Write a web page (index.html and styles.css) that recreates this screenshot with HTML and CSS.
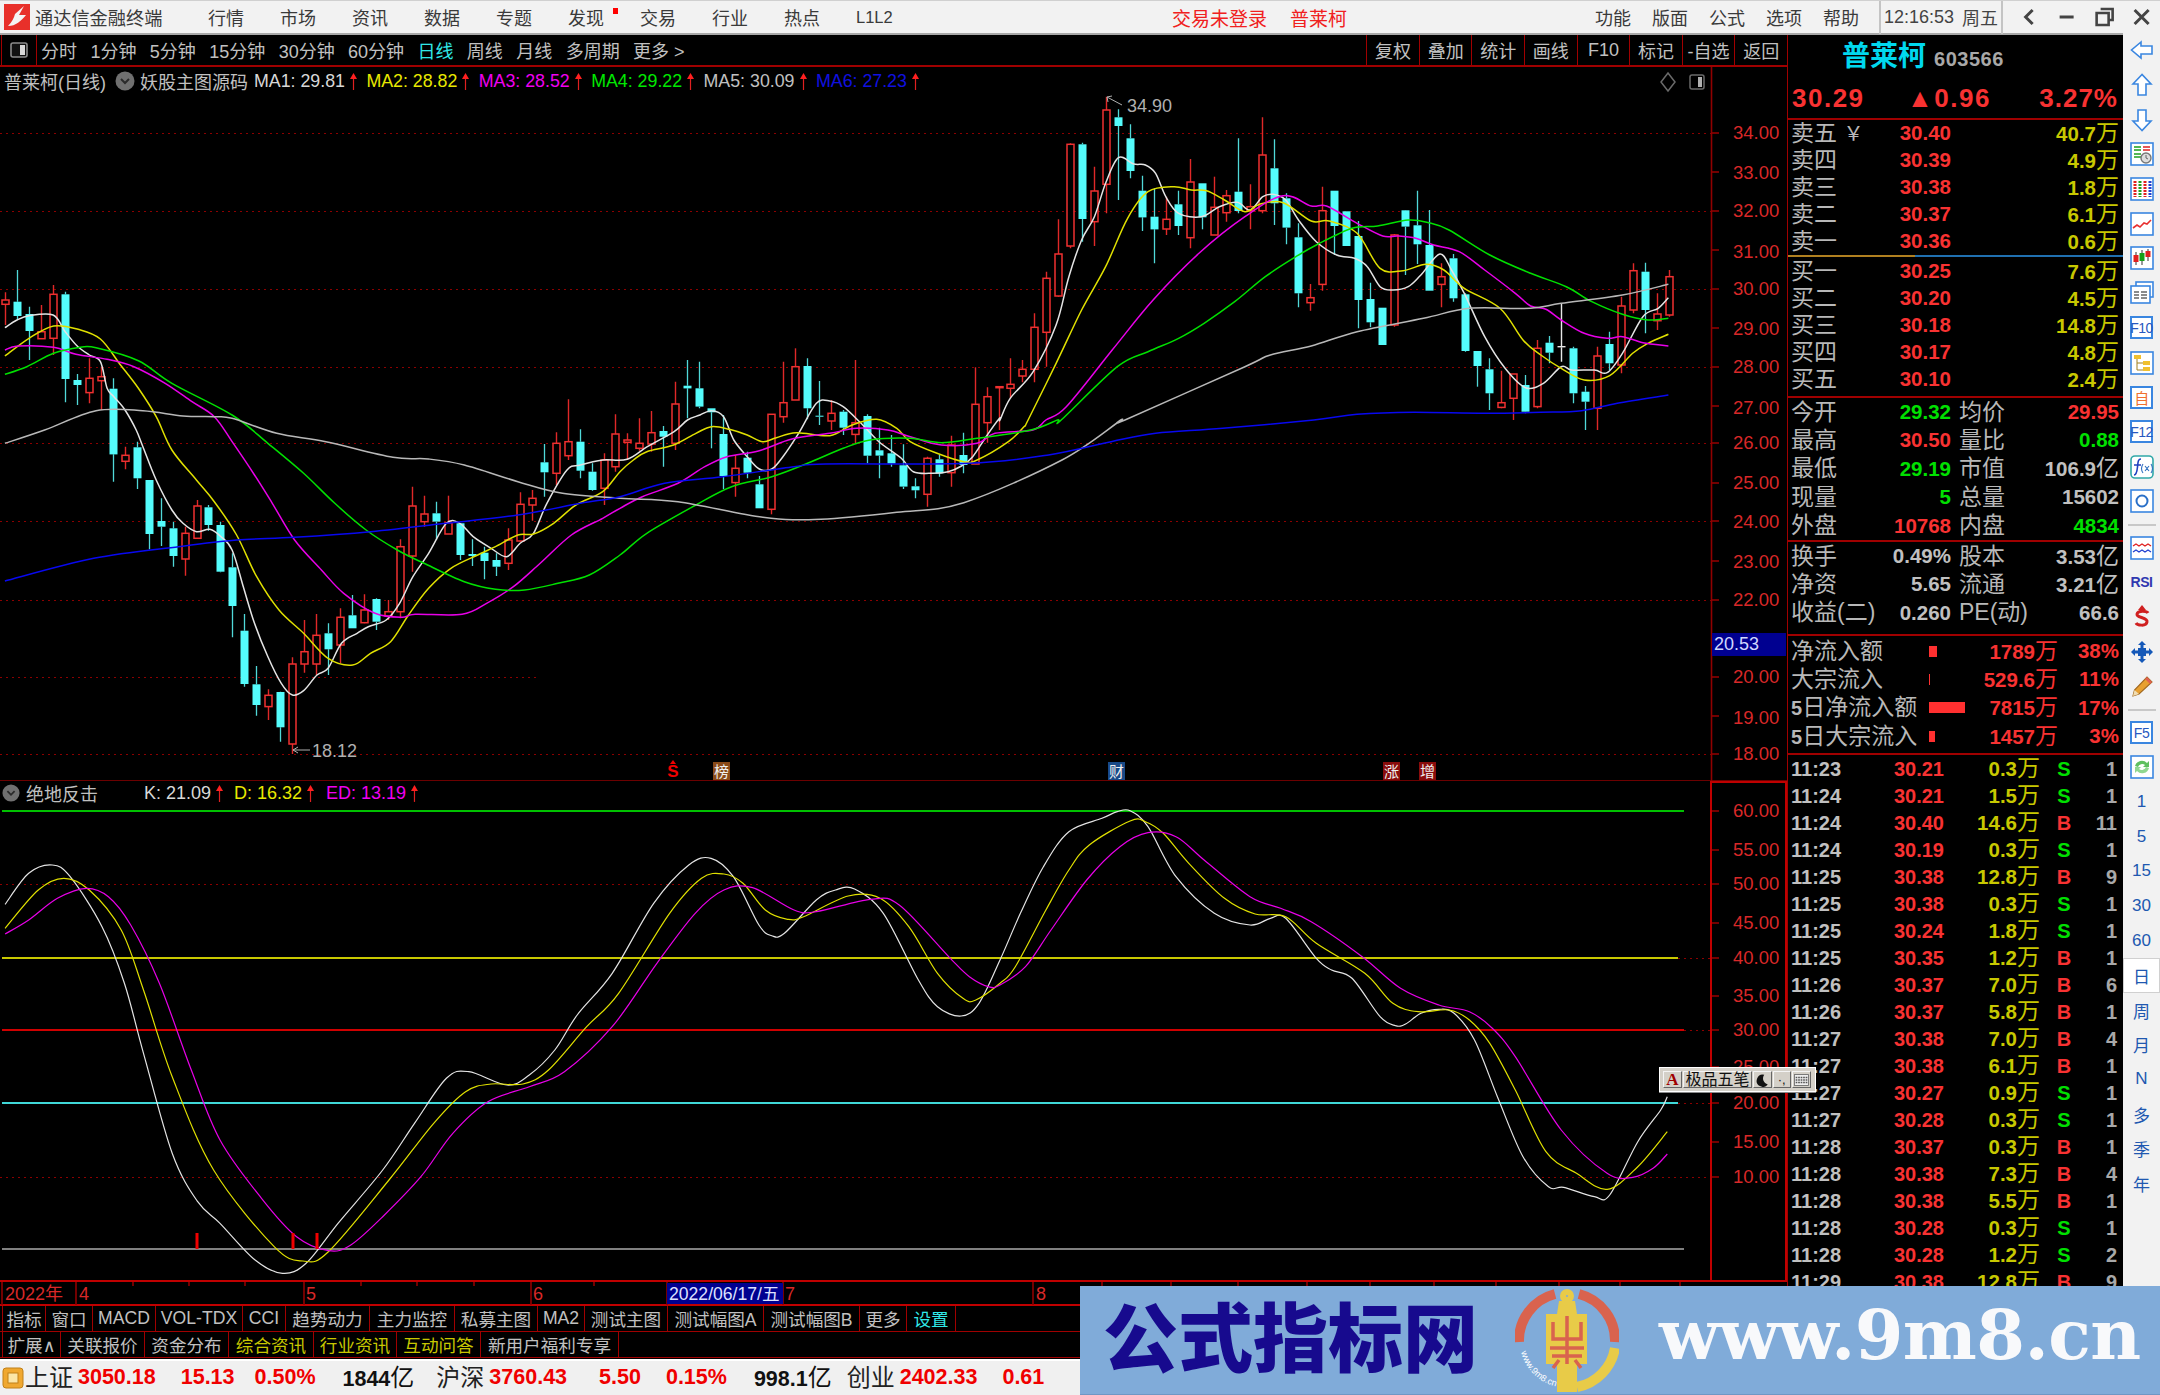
FILE: index.html
```html
<!DOCTYPE html>
<html lang="zh-CN">
<head>
<meta charset="utf-8">
<title>通达信金融终端</title>
<link rel="stylesheet" href="styles.css">
</head>
<body>
<svg class="defs" width="0" height="0">
  <symbol id="up" viewBox="0 0 7 17"><path d="M3.5 17V4" stroke="#e02020" stroke-width="1.2"/><path d="M3.5 0L7 6H0z" fill="#ff2020"/></symbol>
  <symbol id="drop" viewBox="0 0 20 20"><circle cx="10" cy="10" r="9.5" fill="#707070"/><path d="M6 8l4 4 4-4" fill="none" stroke="#2a2a2a" stroke-width="2"/></symbol>
</svg>
<div class="app">
  <header class="titlebar">
    <svg class="logo" viewBox="0 0 26 26"><rect width="26" height="26" fill="#e8302a"/><path d="M4 22C8 18 10 14 11 10L20 2 15 11 22 11C17 17 12 22 4 22Z" fill="#f4f4f4"/></svg>
    <span class="brand">通达信金融终端</span>
    <nav class="menu">
      <span>行情</span><span>市场</span><span>资讯</span><span>数据</span><span>专题</span><span class="dot">发现</span><span>交易</span><span>行业</span><span>热点</span><span class="l1l2">L1L2</span>
    </nav>
    <span class="alert first">交易未登录</span>
    <span class="alert second">普莱柯</span>
    <nav class="menu right">
      <span>功能</span><span>版面</span><span>公式</span><span>选项</span><span>帮助</span>
    </nav>
    <div class="clock"><span class="time">12:16:53</span><span>周五</span></div>
    <div class="winbtns">
      <svg viewBox="0 0 20 20"><path d="M13 3L6 10l7 7" fill="none" stroke="#444" stroke-width="3"/></svg>
      <svg viewBox="0 0 20 20"><path d="M3 10h14" stroke="#444" stroke-width="3"/></svg>
      <svg viewBox="0 0 20 20"><path d="M6 2h12v11h-4M2 6h12v12H2z" fill="none" stroke="#444" stroke-width="2.6"/></svg>
      <svg viewBox="0 0 20 20"><path d="M3 3l14 14M17 3L3 17" stroke="#444" stroke-width="3"/></svg>
    </div>
  </header>

  <main class="main">
    <section class="left">
      <div class="toolbar">
        <div class="toggle"><svg viewBox="0 0 18 16"><rect x="1" y="1" width="16" height="14" rx="2" fill="#111" stroke="#8a8a8a" stroke-width="1.6"/><rect x="10" y="3" width="5" height="10" fill="#d8d8d8"/></svg></div>
        <div class="periods">
          <span>分时</span><span>1分钟</span><span>5分钟</span><span>15分钟</span><span>30分钟</span><span>60分钟</span><span class="on">日线</span><span>周线</span><span>月线</span><span>多周期</span><span>更多 &gt;</span>
        </div>
        <div class="actions">
          <span>复权</span><span>叠加</span><span>统计</span><span>画线</span><span>F10</span><span>标记</span><span>-自选</span><span>返回</span>
        </div>
      </div>

      <div class="pane upper">
        <svg id="price" class="plot" viewBox="0 67 1787 714" width="1787" height="714">
          <g id="price-grid"></g>
          <g id="candles"></g>
          <g id="mas"></g>
          <path class="callout" d="M1107 97l15 8M1107 97l5-1M1107 97l1 5M293 750h17M293 750l5-3M293 750l5 3"/>
          <text class="callout-t" x="1127" y="112">34.90</text>
          <text class="callout-t" x="312" y="757">18.12</text>
          <g class="axis-t">
            <text x="1733" y="139">34.00</text><text x="1733" y="179">33.00</text><text x="1733" y="217">32.00</text><text x="1733" y="258">31.00</text><text x="1733" y="295">30.00</text><text x="1733" y="335">29.00</text><text x="1733" y="373">28.00</text><text x="1733" y="414">27.00</text><text x="1733" y="449">26.00</text><text x="1733" y="489">25.00</text><text x="1733" y="528">24.00</text><text x="1733" y="568">23.00</text><text x="1733" y="606">22.00</text><text x="1733" y="683">20.00</text><text x="1733" y="724">19.00</text><text x="1733" y="760">18.00</text>
          </g>
          <rect class="cur-box" x="1712" y="633" width="74" height="23"/>
          <text class="cur-t" x="1714" y="650">20.53</text>
          <path class="mini" d="M1668 73l7 9-7 9-7-9z"/>
          <rect class="mini" x="1690" y="75" width="14" height="14" rx="2"/><rect class="mini-f" x="1698" y="77" width="4" height="10"/>
          <text class="sig red" x="673" y="777">S</text><path class="sig-a" d="M673 760l3 4h-6z"/>
          <rect class="sig-b brown" x="713" y="762" width="17" height="18"/><text class="sig-w" x="714" y="777">榜</text>
          <rect class="sig-b navy" x="1108" y="762" width="17" height="18"/><text class="sig-w" x="1109" y="777">财</text>
          <rect class="sig-b maroon" x="1383" y="762" width="17" height="18"/><text class="sig-w" x="1384" y="777">涨</text>
          <rect class="sig-b maroon" x="1419" y="762" width="17" height="18"/><text class="sig-w" x="1420" y="777">增</text>
        </svg>
        <div class="inforow">
          <span class="stock">普莱柯(日线)</span>
          <svg class="dropic"><use href="#drop"/></svg>
          <span class="formula">妖股主图源码</span>
          <span class="ma c1">MA1: 29.81<svg class="uparrow"><use href="#up"/></svg></span>
          <span class="ma c2">MA2: 28.82<svg class="uparrow"><use href="#up"/></svg></span>
          <span class="ma c3">MA3: 28.52<svg class="uparrow"><use href="#up"/></svg></span>
          <span class="ma c4">MA4: 29.22<svg class="uparrow"><use href="#up"/></svg></span>
          <span class="ma c5">MA5: 30.09<svg class="uparrow"><use href="#up"/></svg></span>
          <span class="ma c6">MA6: 27.23<svg class="uparrow"><use href="#up"/></svg></span>
        </div>
      </div>

      <div class="pane lower">
        <svg id="osc" class="plot" viewBox="0 781 1787 525" width="1787" height="525">
          <g id="osc-grid"></g>
          <g id="kdj"></g>
          <g class="axis-t">
            <text x="1733" y="817">60.00</text><text x="1733" y="856">55.00</text><text x="1733" y="890">50.00</text><text x="1733" y="929">45.00</text><text x="1733" y="964">40.00</text><text x="1733" y="1002">35.00</text><text x="1733" y="1036">30.00</text><text x="1733" y="1073">25.00</text><text x="1733" y="1109">20.00</text><text x="1733" y="1148">15.00</text><text x="1733" y="1183">10.00</text>
          </g>
          <rect class="cur-box" x="667" y="1283" width="116" height="21"/>
          <g class="axis-t dates">
            <text x="5" y="1300">2022年</text><text x="79" y="1300">4</text><text x="306" y="1300">5</text><text x="533" y="1300">6</text><text x="785" y="1300">7</text><text x="1036" y="1300">8</text>
          </g>
          <text class="date-t" x="669" y="1300">2022/06/17/五</text>
        </svg>
        <div class="inforow kd">
          <svg class="dropic"><use href="#drop"/></svg>
          <span class="formula">绝地反击</span>
          <span class="kv k c1">K: 21.09<svg class="uparrow"><use href="#up"/></svg></span>
          <span class="kv d c2">D: 16.32<svg class="uparrow"><use href="#up"/></svg></span>
          <span class="kv e c3">ED: 13.19<svg class="uparrow"><use href="#up"/></svg></span>
        </div>
      </div>

      <div class="tools">
        <span class="w44">指标</span><span class="w47">窗口</span><span class="w63">MACD</span><span class="w87">VOL-TDX</span><span class="w43">CCI</span><span class="w84">趋势动力</span><span class="w85">主力监控</span><span class="w83">私募主图</span><span class="w47">MA2</span><span class="w83">测试主图</span><span class="w96">测试幅图A</span><span class="w96">测试幅图B</span><span class="w47">更多</span><span class="w49 cy">设置</span>
      </div>
      <div class="tools">
        <span class="w59">扩展∧</span><span class="w84">关联报价</span><span class="w84">资金分布</span><span class="w85 ye">综合资讯</span><span class="w83 ye">行业资讯</span><span class="w84 ye">互动问答</span><span class="w138">新用户福利专享</span>
      </div>
    </section>

    <aside class="quote">
      <div class="q-name"><span class="q-stock">普莱柯</span><span class="q-code">603566</span></div>
      <div class="q-price"><span>30.29</span><span>▲0.96</span><span>3.27%</span></div>

      <div class="book asks">
        <div class="b-row"><span class="lb">卖五 <i>￥</i></span><b class="r">30.40</b><span class="vol"><b>40.7</b>万</span></div>
        <div class="b-row"><span class="lb">卖四</span><b class="r">30.39</b><span class="vol"><b>4.9</b>万</span></div>
        <div class="b-row"><span class="lb">卖三</span><b class="r">30.38</b><span class="vol"><b>1.8</b>万</span></div>
        <div class="b-row"><span class="lb">卖二</span><b class="r">30.37</b><span class="vol"><b>6.1</b>万</span></div>
        <div class="b-row"><span class="lb">卖一</span><b class="r">30.36</b><span class="vol"><b>0.6</b>万</span></div>
      </div>
      <div class="book-sep"></div>
      <div class="book bids">
        <div class="b-row"><span class="lb">买一</span><b class="r">30.25</b><span class="vol"><b>7.6</b>万</span></div>
        <div class="b-row"><span class="lb">买二</span><b class="r">30.20</b><span class="vol"><b>4.5</b>万</span></div>
        <div class="b-row"><span class="lb">买三</span><b class="r">30.18</b><span class="vol"><b>14.8</b>万</span></div>
        <div class="b-row"><span class="lb">买四</span><b class="r">30.17</b><span class="vol"><b>4.8</b>万</span></div>
        <div class="b-row"><span class="lb">买五</span><b class="r">30.10</b><span class="vol"><b>2.4</b>万</span></div>
      </div>

      <div class="stats s5">
        <div class="s-row"><span class="lb">今开</span><b class="g">29.32</b><span class="lb">均价</span><b class="r">29.95</b></div>
        <div class="s-row"><span class="lb">最高</span><b class="r">30.50</b><span class="lb">量比</span><b class="g">0.88</b></div>
        <div class="s-row"><span class="lb">最低</span><b class="g">29.19</b><span class="lb">市值</span><span class="gr"><b>106.9</b>亿</span></div>
        <div class="s-row"><span class="lb">现量</span><b class="g">5</b><span class="lb">总量</span><b class="gr">15602</b></div>
        <div class="s-row"><span class="lb">外盘</span><b class="r">10768</b><span class="lb">内盘</span><b class="g">4834</b></div>
      </div>
      <div class="stats s3">
        <div class="s-row"><span class="lb">换手</span><b class="gr">0.49%</b><span class="lb">股本</span><span class="gr"><b>3.53</b>亿</span></div>
        <div class="s-row"><span class="lb">净资</span><b class="gr">5.65</b><span class="lb">流通</span><span class="gr"><b>3.21</b>亿</span></div>
        <div class="s-row"><span class="lb">收益(二)</span><b class="gr">0.260</b><span class="lb">PE(动)</span><b class="gr">66.6</b></div>
      </div>

      <div class="flows">
        <div class="f-row"><span class="lb">净流入额</span><i class="bar" style="width:8px"></i><span class="amt"><b>1789</b>万</span><b class="r">38%</b></div>
        <div class="f-row"><span class="lb">大宗流入</span><i class="bar" style="width:1px"></i><span class="amt"><b>529.6</b>万</span><b class="r">11%</b></div>
        <div class="f-row"><span class="lb"><b class="d5">5</b>日净流入额</span><i class="bar" style="width:36px"></i><span class="amt"><b>7815</b>万</span><b class="r">17%</b></div>
        <div class="f-row"><span class="lb"><b class="d5">5</b>日大宗流入</span><i class="bar" style="width:6px"></i><span class="amt"><b>1457</b>万</span><b class="r">3%</b></div>
      </div>

      <div class="ticks">
        <div class="t-row"><b>11:23</b><b class="r">30.21</b><span class="vol"><b>0.3</b>万</span><b class="g bs">S</b><b class="n">1</b></div>
        <div class="t-row"><b>11:24</b><b class="r">30.21</b><span class="vol"><b>1.5</b>万</span><b class="g bs">S</b><b class="n">1</b></div>
        <div class="t-row"><b>11:24</b><b class="r">30.40</b><span class="vol"><b>14.6</b>万</span><b class="r bs">B</b><b class="n">11</b></div>
        <div class="t-row"><b>11:24</b><b class="r">30.19</b><span class="vol"><b>0.3</b>万</span><b class="g bs">S</b><b class="n">1</b></div>
        <div class="t-row"><b>11:25</b><b class="r">30.38</b><span class="vol"><b>12.8</b>万</span><b class="r bs">B</b><b class="n">9</b></div>
        <div class="t-row"><b>11:25</b><b class="r">30.38</b><span class="vol"><b>0.3</b>万</span><b class="g bs">S</b><b class="n">1</b></div>
        <div class="t-row"><b>11:25</b><b class="r">30.24</b><span class="vol"><b>1.8</b>万</span><b class="g bs">S</b><b class="n">1</b></div>
        <div class="t-row"><b>11:25</b><b class="r">30.35</b><span class="vol"><b>1.2</b>万</span><b class="r bs">B</b><b class="n">1</b></div>
        <div class="t-row"><b>11:26</b><b class="r">30.37</b><span class="vol"><b>7.0</b>万</span><b class="r bs">B</b><b class="n">6</b></div>
        <div class="t-row"><b>11:26</b><b class="r">30.37</b><span class="vol"><b>5.8</b>万</span><b class="r bs">B</b><b class="n">1</b></div>
        <div class="t-row"><b>11:27</b><b class="r">30.38</b><span class="vol"><b>7.0</b>万</span><b class="r bs">B</b><b class="n">4</b></div>
        <div class="t-row"><b>11:27</b><b class="r">30.38</b><span class="vol"><b>6.1</b>万</span><b class="r bs">B</b><b class="n">1</b></div>
        <div class="t-row"><b>11:27</b><b class="r">30.27</b><span class="vol"><b>0.9</b>万</span><b class="g bs">S</b><b class="n">1</b></div>
        <div class="t-row"><b>11:27</b><b class="r">30.28</b><span class="vol"><b>0.3</b>万</span><b class="g bs">S</b><b class="n">1</b></div>
        <div class="t-row"><b>11:28</b><b class="r">30.37</b><span class="vol"><b>0.3</b>万</span><b class="r bs">B</b><b class="n">1</b></div>
        <div class="t-row"><b>11:28</b><b class="r">30.38</b><span class="vol"><b>7.3</b>万</span><b class="r bs">B</b><b class="n">4</b></div>
        <div class="t-row"><b>11:28</b><b class="r">30.38</b><span class="vol"><b>5.5</b>万</span><b class="r bs">B</b><b class="n">1</b></div>
        <div class="t-row"><b>11:28</b><b class="r">30.28</b><span class="vol"><b>0.3</b>万</span><b class="g bs">S</b><b class="n">1</b></div>
        <div class="t-row"><b>11:28</b><b class="r">30.28</b><span class="vol"><b>1.2</b>万</span><b class="g bs">S</b><b class="n">2</b></div>
        <div class="t-row"><b>11:29</b><b class="r">30.38</b><span class="vol"><b>12.8</b>万</span><b class="r bs">B</b><b class="n">9</b></div>
      </div>
    </aside>

    <aside class="side">
      <div class="ic"><svg viewBox="0 0 24 24"><path d="M11 4L1.5 12 11 20v-4h11V8H11z" fill="#fff" stroke="#3a86e0" stroke-width="1.6"/></svg></div>
      <div class="ic"><svg viewBox="0 0 24 24"><path d="M12 1.5L3 11h5v11h8V11h5z" fill="#fff" stroke="#3a86e0" stroke-width="1.6"/></svg></div>
      <div class="ic"><svg viewBox="0 0 24 24"><path d="M12 22.5L3 13h5V2h8v11h5z" fill="#fff" stroke="#3a86e0" stroke-width="1.6"/></svg></div>
      <div class="ic"><svg viewBox="0 0 24 24"><rect class="bx" x="1" y="1" width="22" height="22"/><path d="M4 5h7M4 8h7" stroke="#18a018" stroke-width="1.6"/><path d="M13 5h7M13 8h7" stroke="#e02020" stroke-width="1.6"/><path d="M4 12h7M4 15h7" stroke="#20a020" stroke-width="1.6"/><circle cx="16" cy="16" r="5" fill="#ddd" stroke="#777" stroke-width="1.4"/><path d="M16 13v3l2 1" stroke="#666" fill="none"/></svg></div>
      <div class="ic"><svg viewBox="0 0 24 24"><rect class="bx" x="1" y="1" width="22" height="22"/><path d="M5 4v16" stroke="#e02020" stroke-width="3" stroke-dasharray="2 1"/><path d="M10 4v16" stroke="#20a020" stroke-width="3" stroke-dasharray="2 1"/><path d="M15 4v16" stroke="#e02020" stroke-width="3" stroke-dasharray="2 1"/><path d="M20 4v16" stroke="#2040d0" stroke-width="3" stroke-dasharray="2 1"/></svg></div>
      <div class="ic"><svg viewBox="0 0 24 24"><rect class="bx" x="1" y="1" width="22" height="22"/><path d="M3 16l4-3 3 2 4-4 3 1 4-4" fill="none" stroke="#e83030" stroke-width="1.6"/></svg></div>
      <div class="ic"><svg viewBox="0 0 24 24"><rect class="bx" x="1" y="1" width="22" height="22"/><path d="M6 6v13M12 4v15M18 3v12" stroke="#333"/><rect x="3.5" y="9" width="5" height="7" fill="#e02020"/><rect x="9.5" y="7" width="5" height="8" fill="#18a018"/><rect x="15.5" y="5" width="5" height="6" fill="#e02020"/></svg></div>
      <div class="ic"><svg viewBox="0 0 24 24"><rect class="bx" x="6" y="1" width="17" height="15"/><rect class="bx" x="1" y="5" width="19" height="17"/><path d="M4 11h5M4 14h5M4 17h5M11 11h6M11 14h6M11 17h6" stroke="#666" stroke-width="1.4"/></svg></div>
      <div class="ic"><span class="fk">F10</span></div>
      <div class="ic"><svg viewBox="0 0 24 24"><rect class="bx" x="1" y="1" width="22" height="22"/><path d="M7 7v12h6M7 12h6" fill="none" stroke="#a08020"/><rect x="4" y="4" width="7" height="4" fill="#f0c030"/><rect x="13" y="10" width="7" height="4" fill="#f0c030"/><rect x="13" y="16" width="7" height="4" fill="#f0c030"/></svg></div>
      <div class="ic"><span class="fk org">自</span></div>
      <div class="ic"><span class="fk">F12</span></div>
      <div class="ic"><svg viewBox="0 0 24 24"><rect class="bx teal" x="1" y="1" width="22" height="22" rx="4"/><path d="M11 4c-3 0-3 3-3.500 8S6 20 4 20M4 10h7" fill="none" stroke="#2040c0" stroke-width="1.6"/><path d="M13 9c-2 3-2 6 0 9M21 9c2 3 2 6 0 9M15 11l4 5M19 11l-4 5" fill="none" stroke="#3070c0" stroke-width="1.1"/></svg></div>
      <div class="ic"><svg viewBox="0 0 24 24"><rect class="bx" x="1" y="1" width="22" height="22"/><circle cx="12" cy="12" r="5.500" fill="none" stroke="#2a70c8" stroke-width="2"/></svg></div>
      <div class="side-sep"></div>
      <div class="ic"><svg viewBox="0 0 24 24"><rect class="bx" x="1" y="1" width="22" height="22"/><path d="M3 10l3-2 3 2 3-2 3 2 3-2 3 2" fill="none" stroke="#e02020" stroke-width="1.3"/><path d="M3 16l3-2 3 2 3-2 3 2 3-2 3 2" fill="none" stroke="#2040d0" stroke-width="1.3"/></svg></div>
      <div class="ic"><span class="rsi">RSI</span></div>
      <div class="ic"><svg viewBox="0 0 24 24"><path d="M18 8c-1-2-10-3-11 1s11 3 10 8-10 3-11 1" fill="none" stroke="#d02020" stroke-width="3"/><path d="M12 0l4 5H8z" fill="#d02020"/></svg></div>
      <div class="ic"><svg viewBox="0 0 24 24"><path d="M12 1l4 4h-8zM12 23l-4-4h8zM1 12l4-4v8zM23 12l-4 4V8z" fill="#1458b8"/><rect x="8" y="8" width="8" height="8" fill="#1458b8"/><path d="M5 12h14M12 5v14" stroke="#1458b8" stroke-width="3"/></svg></div>
      <div class="ic"><svg viewBox="0 0 24 24"><path d="M3 22l1.500-6L17 3l5 5L9 20z" fill="#e8a030" stroke="#a06820" stroke-width="1.100"/><path d="M17 3l5 5-2 2-5-5z" fill="#e06050"/><path d="M3 22l1.500-6 4.500 4z" fill="#f0dcb0"/></svg></div>
      <div class="side-sep"></div>
      <div class="ic"><span class="fk">F5</span></div>
      <div class="ic"><svg viewBox="0 0 24 24"><rect class="bx" x="1" y="1" width="22" height="22"/><path d="M5 11a7 7 0 0 1 12-3l2-2v6h-6l2-2a4.500 4.500 0 0 0-7 2z" fill="#60c060"/><path d="M19 13a7 7 0 0 1-12 3l-2 2v-6h6l-2 2a4.500 4.500 0 0 0 7-2z" fill="#90d890"/></svg></div>
      <div class="ic per">1</div><div class="ic per">5</div><div class="ic per">15</div><div class="ic per">30</div><div class="ic per">60</div>
      <div class="ic per sel">日</div><div class="ic per">周</div><div class="ic per">月</div><div class="ic per">N</div><div class="ic per">多</div><div class="ic per">季</div><div class="ic per">年</div>
    </aside>
  </main>

  <footer class="status">
    <svg class="st-ic" viewBox="0 0 22 22"><rect x="1" y="1" width="20" height="20" rx="3" fill="#f0a830" stroke="#c08018"/><rect x="6" y="6" width="10" height="10" fill="#fbe6a8" stroke="#c08018"/></svg>
    <span class="st-l">上证</span><b class="st-v">3050.18</b><b class="st-n">15.13</b><b class="st-n near">0.50%</b><span class="st-k"><b>1844</b>亿</span>
    <span class="st-l">沪深</span><b class="st-v">3760.43</b><b class="st-n wide">5.50</b><b class="st-n">0.15%</b><span class="st-k"><b>998.1</b>亿</span>
    <span class="st-l tight">创业</span><b class="st-v">2402.33</b><b class="st-n">0.61</b>
  </footer>
</div>

<div class="ime">
  <span class="ime-a">A</span>
  <span class="ime-n">极品五笔</span>
  <span class="ime-b"><svg viewBox="0 0 16 16"><path d="M10 2a7 7 0 1 0 4 11A7 7 0 0 1 10 2z" fill="#111"/></svg></span>
  <span class="ime-b dots">·,</span>
  <span class="ime-b"><svg viewBox="0 0 18 14"><rect x=".5" y=".5" width="17" height="13" fill="#eee" stroke="#666"/><path d="M2 4h14M2 7h14M2 10h14" stroke="#555" stroke-dasharray="2 1" stroke-width="2"/></svg></span>
</div>

<div class="mark">
  <span class="mark-cn">公式指标网</span>
  <svg class="mark-logo" viewBox="0 0 104 104">
    <defs><path id="wm-arc" d="M6 64A47 47 0 0 0 44 99"/></defs>
    <path d="M4 54A48 48 0 0 1 40 6" fill="none" stroke="#d9634e" stroke-width="10"/>
    <path d="M64 6A48 48 0 0 1 100 54" fill="none" stroke="#d9634e" stroke-width="10"/>
    <path d="M100 60A48 48 0 0 1 62 99" fill="none" stroke="#e8cb48" stroke-width="10"/>
    <text class="mark-arc"><textPath href="#wm-arc">www.9m8.cn</textPath></text>
    <circle cx="52" cy="8" r="4" fill="none" stroke="#e8cb48" stroke-width="6"/>
    <path d="M44 13h16l2 13h10v50H62v28H42V76H31V26h11z" fill="#e8cb48"/>
    <path d="M38 34v17h28V34M52 28v28M35 60h34M52 56v20M37 68h30M44 72l-6 8M60 72l6 8" fill="none" stroke="#d9634e" stroke-width="3.500"/>
  </svg>
  <span class="mark-url">www.9m8.cn</span>
</div>

<script src="chart.js"></script>
</body>
</html>
```
FILE: styles.css
```css
* { box-sizing: border-box; }
html, body { margin: 0; padding: 0; }
body {
  width: 2160px; height: 1395px; overflow: hidden; position: relative;
  background: #000; color: #c0c0c0;
  font-family: "Liberation Sans", "DejaVu Sans", "Noto Sans CJK SC", sans-serif;
  font-size: 18px;
}
b { font-weight: 700; }
i { font-style: normal; }
.defs { position: absolute; }
.app { display: flex; flex-direction: column; width: 2160px; height: 1395px; }

/* title bar */
.titlebar {
  height: 35px; flex: none; display: flex; align-items: center;
  background: #f2f2f2; border-top: 1px solid #d0d0d0; border-bottom: 2px solid #a8a8a8; color: #333;
}
.logo { width: 26px; height: 26px; margin-left: 4px; flex: none; }
.brand { margin-left: 5px; font-size: 18.2px; width: 128px; white-space: nowrap; color: #3a3a3a; }
.menu { display: flex; align-items: center; gap: 36px; margin-left: 45px; color: #3a3a3a; }
.menu span { width: 36px; white-space: nowrap; font-size: 18px; }
.menu .l1l2 { font-size: 16.5px; }
.menu .dot { position: relative; }
.menu .dot::after { content: ""; position: absolute; left: 45px; top: 4px; width: 5px; height: 6px; background: #f00; }
.alert { color: #f02020; font-size: 19px; white-space: nowrap; }
.alert.first { margin-left: 280px; }
.alert.second { margin-left: 23px; }
.menu.right { gap: 21px; margin-left: auto; }
.clock {
  margin-left: 20px; width: 124px; height: 33px; display: flex; align-items: center; justify-content: center; gap: 8px;
  border-left: 2px solid #c4c4c4; border-right: 2px solid #c4c4c4; color: #444; white-space: nowrap;
}
.winbtns { display: flex; margin-left: 8px; width: 149px; flex: none; }
.winbtns svg { width: 37.25px; height: 20px; }

/* main */
.main { display: flex; flex: 1; min-height: 0; }
.left { width: 1787px; flex: none; display: flex; flex-direction: column; }

.toolbar { height: 32px; flex: none; display: flex; align-items: center; border-bottom: 2px solid #a00000; }
.toggle { width: 36px; height: 30px; border-left: 1px solid #a00000; border-right: 1px solid #a00000; display: flex; align-items: center; justify-content: center; margin-left: 1px; }
.toggle svg { width: 18px; height: 16px; }
.periods { display: flex; gap: 13.4px; margin-left: 4px; white-space: nowrap; }
.periods .on { color: #30e8e8; }
.actions { display: flex; margin-left: auto; height: 30px; }
.actions span { width: 52.6px; display: flex; align-items: center; justify-content: center; border-left: 1px solid #a00000; white-space: nowrap; }

.pane { position: relative; flex: none; }
.pane.upper { height: 714px; }
.pane.lower { height: 525px; }
.plot { display: block; }
.inforow { position: absolute; left: 0; top: 0; height: 28px; display: flex; align-items: center; white-space: nowrap; }
.stock { margin-left: 4px; width: 108px; }
.dropic { width: 20px; height: 20px; margin-left: 3px; flex: none; }
.formula { margin-left: 5px; width: 114px; }
.ma { width: 112.4px; display: flex; align-items: center; font-size: 17.8px; }
.uparrow { width: 7px; height: 17px; margin-left: 5px; }
.c1 { color: #d8d8d8; } .c2 { color: #e8e800; } .c3 { color: #f000f0; } .c4 { color: #00e800; } .c5 { color: #c0c0c0; } .c6 { color: #1010e0; }
.inforow.kd { height: 24px; }
.kd .dropic { margin-left: 2px; width: 18px; height: 18px; }
.kd .formula { margin-left: 6px; width: 118px; }
.kv { display: flex; align-items: center; }
.kv.k { width: 90px; } .kv.d { width: 92px; } .kv.e { width: 92px; }

/* svg chart */
.grid-dot { stroke: #8c0000; stroke-width: 1; stroke-dasharray: 2 4; fill: none; }
.axis-line { stroke: #900000; stroke-width: 1.6; fill: none; }
.axis-thick { stroke: #c00000; stroke-width: 2; fill: none; }
.axis-t text { fill: #d82828; font-size: 18.5px; }
.dates text { font-size: 18px; }
.date-t { fill: #dde0ff; font-size: 17.6px; }
.cur-box { fill: #000090; }
.cur-t { fill: #d0d8ff; font-size: 18px; }
.callout { stroke: #b0b0b0; fill: none; stroke-width: 1; }
.callout-t { fill: #b0b0b0; font-size: 18px; }
.mini { fill: none; stroke: #6a6a6a; stroke-width: 1.5; }
.mini-f { fill: #b0b0b0; }
.sig { font-size: 17px; font-weight: 700; }
.sig.red { fill: #f00000; text-anchor: middle; }
.sig-a { fill: #f00000; }
.sig-b.brown { fill: #8a4a18; } .sig-b.navy { fill: #184a88; } .sig-b.maroon { fill: #8a0c0c; }
.sig-w { fill: #f0f0f0; font-size: 15px; }
.c-red { fill: #000; stroke: #f03030; stroke-width: 1.5; }
.w-red { stroke: #e02828; stroke-width: 1.4; }
.c-cy { fill: #54fcfc; }
.w-cy { stroke: #50d8d8; stroke-width: 1.3; }
.w-wh { stroke: #e8e8e8; stroke-width: 1.4; }
.ln { fill: none; stroke-width: 1.5; stroke-linejoin: round; }
.ln.thin { stroke-width: 1.2; }
.l1 { stroke: #e4e4e4; } .l2 { stroke: #e0e000; } .l3 { stroke: #e800e8; } .l4 { stroke: #00e000; } .l5 { stroke: #b8b8b8; } .l6 { stroke: #0808f0; }
.h { fill: none; stroke-width: 2; }
.h.gn { stroke: #00c000; } .h.ye { stroke: #c8c800; } .h.rd { stroke: #d00000; } .h.cy { stroke: #40d8d8; } .h.gy { stroke: #808080; }
.sigbar { fill: #f00000; }

/* function bars */
.tools { height: 26px; flex: none; display: flex; align-items: center; border-bottom: 1px solid #a00000; padding-left: 2px; white-space: nowrap; font-size: 17.6px; }
.tools span { height: 100%; display: flex; align-items: center; justify-content: center; border-right: 1px solid #a00000; }
.tools span:first-child { border-left: 1px solid #a00000; }
.tools .cy { color: #30e8e8; } .tools .ye { color: #c8c800; }
.w43 { width: 43px; } .w44 { width: 44px; } .w47 { width: 47px; } .w49 { width: 49px; } .w59 { width: 59px; } .w63 { width: 63px; } .w83 { width: 83px; } .w84 { width: 84px; } .w85 { width: 85px; } .w87 { width: 87px; } .w96 { width: 96px; } .w138 { width: 138px; }

/* quote panel */
.quote { width: 336px; flex: none; border-left: 1px solid #a00000; background: #000; overflow: hidden; }
.lb { color: #b8b8b8; font-size: 23px; white-space: nowrap; }
.lb i { font-size: 20px; }
.r { color: #f83232; } .g { color: #00e000; } .gr { color: #c0c0c0; }
.q-name { height: 42px; display: flex; align-items: center; padding: 1px 0 0 54px; }
.q-stock { font-size: 28px; font-weight: 700; color: #00d8ee; line-height: 1; }
.q-code { margin: 5px 0 0 8px; font-size: 20px; font-weight: 700; color: #a8a8a8; letter-spacing: .5px; line-height: 1; }
.q-price { height: 43px; display: grid; grid-template-columns: 115px auto 1fr; align-items: center; padding: 2px 5px 0 4px; border-bottom: 2px solid #a00000; color: #f83232; font-size: 26px; font-weight: 700; letter-spacing: 1.5px; }
.q-price span:last-child { text-align: right; letter-spacing: 1px; }

.b-row, .s-row, .f-row, .t-row { line-height: 1; grid-template-rows: 100%; }
.b-row { height: 27px; display: grid; grid-template-columns: 160px 1fr; align-items: center; padding: 0 4px 0 3px; }
.b-row .lb { grid-column: 1; grid-row: 1; }
.b-row .r { grid-column: 1; grid-row: 1; justify-self: end; font-size: 20.5px; }
.b-row .vol { grid-column: 2; justify-self: end; }
.vol { color: #c8c800; font-size: 23px; white-space: nowrap; }
.vol b { font-size: 20.5px; }
.book-sep { height: 2px; background: linear-gradient(90deg, #b08020 0 127px, #2070b0 127px); margin: 0 0 1px; }
.bids { padding-bottom: 3px; }
.stats { border-top: 2px solid #a00000; }
.s-row { height: 28.4px; display: grid; grid-template-columns: 160px auto 1fr; align-items: center; padding: 0 4px 0 3px; }
.s-row .lb:first-child { grid-column: 1; grid-row: 1; }
.s-row > :nth-child(2) { grid-column: 1; grid-row: 1; justify-self: end; font-size: 20.5px; }
.s-row > :nth-child(3) { grid-column: 2; grid-row: 1; margin-left: 8px; }
.s-row > :nth-child(4) { grid-column: 3; grid-row: 1; justify-self: end; font-size: 20.5px; }
.s-row span.gr { font-size: 23px; white-space: nowrap; }
.s-row span.gr b { font-size: 20.5px; }
.stats.s3 { padding-bottom: 7px; }
.flows { border-top: 2px solid #a00000; padding-bottom: 3px; padding-top: 1px; }
.f-row { height: 28.3px; display: grid; grid-template-columns: 138px 40px 1fr 61px; align-items: center; padding: 0 4px 0 3px; }
.f-row .lb b.d5 { font-size: 20px; }
.bar { display: block; height: 11px; background: #ff3030; }
.amt { justify-self: end; color: #f83232; font-size: 23px; white-space: nowrap; }
.amt b { font-size: 20.5px; }
.f-row > b { justify-self: end; font-size: 20.5px; }
.ticks { border-top: 2px solid #a00000; }
.t-row { height: 27px; display: grid; grid-template-columns: 153px 96px 48px 1fr; align-items: center; padding: 0 6px 0 3px; font-size: 20px; position: relative; }
.t-row > b:first-child { grid-column: 1; grid-row: 1; color: #c0c0c0; }
.t-row > b.r:not(.bs) { grid-column: 1; grid-row: 1; justify-self: end; }
.t-row .vol { grid-column: 2; justify-self: end; }
.t-row .bs { grid-column: 3; justify-self: center; }
.t-row .n { grid-column: 4; justify-self: end; color: #a8a8a8; }

/* side icon bar */
.side { flex: 1; background: #f2f2f2; display: flex; flex-direction: column; align-items: center; margin-top: -2px; position: relative; }
.ic { height: 34.7px; flex: none; display: flex; align-items: center; justify-content: center; width: 100%; }
.ic svg { width: 24px; height: 24px; }
.bx { fill: #fff; stroke: #3a86e0; stroke-width: 1.6; }
.bx.teal { stroke: #30a8a8; }
.fk { width: 23px; height: 23px; display: flex; align-items: center; justify-content: center; background: #fff; border: 2px solid #3a86e0; color: #2858c0; font-size: 14px; letter-spacing: -.5px; }
.fk.org { color: #f07030; font-size: 15px; }
.rsi { color: #3038b0; font-size: 14px; font-weight: 700; letter-spacing: -.5px; }
.side-sep { height: 11.6px; width: 28px; flex: none; position: relative; }
.side-sep::after { content: ""; position: absolute; left: 0; right: 0; top: 5px; height: 2px; background: #c8c8c8; }
.per { color: #2058b0; font-size: 17px; }
.per.sel { background: #fff; border: 1px solid #d0d0d0; }

/* status */
.status { height: 36px; flex: none; display: flex; align-items: center; background: #f0f0f0; color: #222; white-space: nowrap; border-top: 2px solid #fff; line-height: 1; }
.st-ic { width: 22px; height: 22px; margin-left: 2px; flex: none; }
.st-l { font-size: 24px; color: #222; margin-left: 22px; }
.st-l.tight { margin-left: 15px; }
.st-ic + .st-l { margin-left: 1px; }
.st-v { color: #f00000; font-size: 21.5px; margin-left: 5px; }
.st-n { color: #f00000; font-size: 21.5px; margin-left: 25px; }
.st-n.near { margin-left: 20px; }
.st-n.wide { margin-left: 32px; }
.st-k { margin-left: 27px; font-size: 24px; color: #111; }
.st-k b { font-size: 21.5px; }

/* overlays */
.ime { position: absolute; left: 1659px; top: 1067px; width: 157px; height: 25px; display: flex; gap: 1px; padding: 3px; background: #d4d0c8; border: 1px solid #fff; box-shadow: 0 1px 0 #888; color: #111; }
.ime span { display: flex; align-items: center; justify-content: center; background: #d4d0c8; border: 1px solid #f4f4f4; border-right-color: #666; border-bottom-color: #666; line-height: 1; }
.ime-a { width: 19px; color: #a00000; font: 700 17px "Liberation Serif", serif; }
.ime-n { width: 69px; font-size: 16px; white-space: nowrap; }
.ime-b { width: 18.5px; font-size: 13px; }
.ime-b svg { width: 15px; height: 14px; }

.mark { position: absolute; left: 1080px; top: 1286px; width: 1080px; height: 109px; display: flex; align-items: center; background: #80abd9; border-bottom: 1px solid #6f97c4; }
.mark-cn { margin-left: 23px; width: 375px; color: #170a8e; font-size: 75px; font-weight: 900; white-space: nowrap; line-height: 1; }
.mark-logo { width: 104px; height: 104px; margin-left: 37px; flex: none; }
.mark-arc { fill: #fff; font-size: 9px; }
.mark-url { margin-left: 40px; color: #f8f9fb; font: 700 70px "DejaVu Serif", serif; white-space: nowrap; letter-spacing: -.6px; position: relative; top: -6px; }
```
FILE: chart.js
```js
// Candles: [colour, wickTop, bodyTop, bodyBottom, wickBottom]; colour 1 red, 0 cyan, 2 white doji.
// First list is in units of (y-260)*3, second in units of y*3.
var A = [
[1,97,120,133,195],[0,30,125,168,180],[0,140,162,213,300],[1,135,215,236,236],[1,75,103,235,285],[0,95,103,357,427],[0,342,360,375,435],[1,295,355,398,430],[1,320,350,362,450],[0,355,386,583,665],
[1,560,586,604,628],[0,545,562,655,687],[0,660,660,822,868],[0,715,783,800,858],[0,785,805,888,920],[1,800,820,897,947],[1,720,738,835,835],[0,735,742,795,812],[0,785,795,935,937],[0,880,922,1038,1132],
[0,1062,1112,1272,1280],[0,1218,1273,1335,1367],[1,1288,1306,1340,1380],[0,1295,1296,1402,1445],[1,1192,1212,1452,1482],[1,1080,1175,1212,1238],[1,1062,1126,1212,1245],[0,1090,1120,1168,1245],[1,1045,1072,1155,1210],[0,1005,1066,1105,1105],
[1,1003,1050,1088,1090],[0,1015,1017,1085,1110],[1,1020,1055,1068,1080],[1,838,860,1055,1075],[1,680,738,888,935],[1,707,762,785,800],[0,725,760,785,840],[1,707,788,822,822],[0,790,790,885,900],[0,838,882,888,918],
[0,860,878,903,958],[0,880,900,920,948],[1,805,840,910,930],[1,697,733,843,845],[1,690,715,735,782],[0,552,607,637,710],[1,517,550,640,675],[1,418,545,587,600],[0,508,545,632,655],[0,610,635,690,692],
[1,580,600,685,735],[1,463,522,620,635],[1,520,540,547,600],[1,475,550,565,572],[1,453,518,552,575],[0,498,513,530,620],[1,365,432,550,570],[0,300,377,385,475],[0,305,385,440,445],[0,445,445,457,565],
[0,465,522,648,688],[1,585,625,668,710],[0,575,593,638,655],[0,648,673,745,745],[1,463,463,748,763],[1,305,428,470,488],[1,265,320,420,420],[0,295,318,445,478],[0,363,467,470,495],[1,420,460,483,510],
[0,450,455,503,525],[1,300,488,523,550],[0,463,468,587,610],[0,503,571,587,655],[0,525,580,611,620],[0,553,616,680,687],[0,655,679,691,715],[1,590,595,703,740],[0,585,598,640,650],[1,527,555,638,680],
[0,518,585,615,640],[1,322,433,612,612],[1,382,410,488,548],[1,378,380,383,510]
];
var B = [
[1,1075,1153,1165,1195],[1,1080,1108,1128,1147],[1,940,982,1108,1147],[1,815,835,997,1100],[1,658,762,888,890],[1,430,433,738,745],[0,428,433,657,725],[1,500,573,665,738],[1,290,330,553,640],[0,328,352,378,600],
[0,373,415,513,535],[0,527,572,652,693],[0,565,650,688,790],[1,590,658,687,705],[0,572,613,678,705],[1,477,546,713,745],[0,550,550,652,688],[1,530,622,705,705],[1,570,587,638,665],[0,415,575,633,640],
[1,553,620,632,688],[1,352,465,632,640],[0,418,505,610,675],[0,580,595,683,733],[0,670,712,880,922],[1,852,893,908,932],[1,560,632,853,872],[0,572,572,678,765],[0,634,634,738,738],[0,663,708,900,985],
[0,848,897,967,982],[0,923,923,1035,1035],[1,702,705,975,980],[0,630,631,680,825],[0,572,676,733,792],[0,630,735,872,872],[1,790,830,853,922],[0,762,775,895,905],[0,880,883,1053,1055],[0,1053,1053,1098,1160],
[0,1075,1108,1180,1230],[1,1112,1208,1222,1225],[1,1122,1122,1195,1260],[0,1125,1155,1235,1240],[1,1020,1045,1220,1225],[0,1008,1028,1058,1090],[2,910,1040,1042,1085],[0,1040,1045,1180,1210],[0,1158,1175,1205,1290],[1,1040,1068,1225,1290],
[0,995,1032,1090,1110],[1,890,918,1095,1120],[1,790,812,930,940],[0,788,815,930,1000],[1,880,942,962,990],[1,810,830,945,950]
];
// Moving averages, read off three views: a (x*2.24, (y-260)*3), b ((x-620)*2.24, (y-260)*3), c ((x-1000)*1.96, y*3)
var MAS = [
 ['l1',[[11,203],[38,180],[65,167],[119,165],[146,215],[173,258],[200,285],[225,305],[240,385],[255,410],[280,450],[305,510],[320,560],[350,660],[385,750],[410,790],[440,815],[470,808],[495,830],[520,870],[545,980],[570,1090],[600,1190],[630,1270],[655,1305],[680,1292],[710,1245],[735,1225],[765,1150],[800,1120],[825,1100],[865,1080],[895,1030],[925,950],[960,880],[1000,790],[1030,790],[1060,830],[1100,865],[1135,890],[1165,850],[1195,820],[1225,730],[1270,630],[1300,615],[1350,600],[1405,598],[1450,560],[1510,515],[1540,480],[1568,465]],
  [[205,452],[232,470],[255,540],[285,590],[312,627],[340,627],[365,590],[400,520],[440,430],[470,423],[500,440],[540,490],[580,545],[630,595],[657,635],[700,640],[735,635],[765,618],[790,590],[820,530],[850,475]],
  [[0,1260],[20,1195],[65,1115],[110,975],[135,830],[160,720],[185,650],[207,550],[232,473],[262,492],[285,495],[305,520],[325,590],[350,640],[395,650],[430,620],[465,607],[490,630],[515,590],[535,583],[560,600],[585,660],[620,725],[660,765],[695,775],[720,800],[745,860],[770,870],[800,860],[825,825],[862,762],[885,810],[910,880],[950,1010],[990,1105],[1030,1163],[1065,1150],[1100,1100],[1120,1110],[1165,1110],[1190,1118],[1220,1060],[1260,950],[1290,925],[1310,893]]],
 ['l2',[[11,288],[65,235],[120,198],[175,208],[225,237],[270,315],[310,385],[350,470],[385,570],[440,660],[480,725],[530,825],[575,950],[625,1050],[680,1120],[735,1195],[790,1215],[830,1180],[875,1145],[915,1065],[960,985],[1010,925],[1070,885],[1110,860],[1160,825],[1195,822],[1240,790],[1290,735],[1350,695]],
  [[0,635],[30,600],[60,575],[120,555],[170,520],[205,500],[245,508],[285,525],[320,545],[350,533],[395,518],[470,527],[520,495],[575,478],[620,505],[650,545],[710,580],[770,605],[800,600],[870,545],[905,500]],
  [[55,1260],[110,1090],[160,930],[207,800],[250,655],[290,575],[340,560],[375,570],[405,572],[440,600],[480,635],[510,612],[555,608],[610,663],[645,663],[700,700],[745,805],[790,812],[835,793],[870,810],[910,865],[980,925],[1025,1020],[1060,1065],[1100,1105],[1145,1140],[1195,1127],[1240,1060],[1270,1030],[1310,1003]]],
 ['l3',[[11,270],[40,258],[120,262],[170,283],[240,298],[300,320],[370,370],[430,425],[480,470],[520,545],[570,645],[610,730],[660,840],[720,930],[770,1000],[840,1060],[900,1072],[930,1063],[1035,1063],[1090,1030],[1150,980],[1210,910],[1280,825],[1350,775]],
  [[0,745],[50,710],[130,670],[190,620],[240,590],[310,573],[385,537],[470,520],[530,505],[600,510],[650,530],[720,555],[800,550],[840,520],[925,510]],
  [[90,1260],[130,1220],[220,1050],[300,900],[390,760],[480,650],[555,587],[610,618],[640,618],[700,670],[750,708],[780,708],[815,715],[850,735],[900,755],[950,810],[1010,880],[1040,918],[1070,928],[1100,960],[1145,1000],[1190,1015],[1220,1010],[1260,1028],[1310,1038]]],
 ['l4',[[11,343],[60,320],[120,280],[180,262],[215,263],[310,302],[385,370],[520,465],[600,550],[680,640],[750,730],[820,810],[890,870],[950,910],[1040,965],[1110,988],[1175,990],[1250,970],[1320,945]],
  [[0,885],[60,820],[170,735],[250,680],[340,650],[420,610],[500,565],[560,540],[650,535],[720,548],[800,535],[920,510],[980,480]],
  [[120,1260],[230,1100],[290,1055],[350,1015],[400,970],[460,905],[520,830],[580,770],[620,735],[690,685],[740,678],[800,660],[840,668],[880,690],[960,765],[1040,820],[1110,860],[1160,905],[1220,943],[1270,960],[1310,955]]],
 ['l5',[[11,550],[100,510],[215,452],[320,452],[410,468],[480,470],[520,475],[620,520],[730,545],[880,592],[960,597],[1040,615],[1160,665],[1260,700]],
  [[0,715],[130,725],[320,772],[450,778],[620,757],[770,728],[990,600],[1120,483],[1350,350],[1470,285]],
  [[245,1260],[480,1100],[530,1065],[610,1038],[700,995],[830,955],[920,925],[1040,925],[1100,910],[1220,885],[1310,853]]],
 ['l6',[[11,963],[210,895],[400,860],[530,840],[660,832],[830,815],[1000,790],[1160,765],[1300,730]],
  [[0,710],[100,670],[230,650],[390,620],[460,612],[780,610],[960,585],[1100,545],[1200,520],[1350,505]],
  [[615,1260],[700,1243],[810,1237],[950,1240],[1060,1237],[1140,1232],[1210,1210],[1310,1185]]]
];
// Oscillator, two views: a (x*1.568, (y-770)*3), b ((x-1000)*1.96, (y-770)*3)
var OSC = [
 ['l1',[[8,403],[45,310],[82,285],[110,320],[160,470],[195,640],[225,850],[270,1150],[310,1295],[345,1360],[400,1470],[443,1510],[480,1480],[530,1360],[600,1200],[650,1060],[700,925],[735,905],[795,945],[830,915],[870,840],[905,735],[960,610],[1025,400],[1080,285],[1115,265],[1150,320],[1190,465],[1210,497],[1230,490],[1280,390],[1310,360],[1340,357],[1385,430],[1440,630],[1470,710],[1507,738],[1535,700]],
  [[0,570],[40,430],[85,290],[135,185],[200,145],[230,125],[255,122],[290,170],[345,320],[420,430],[490,465],[530,445],[560,445],[620,565],[650,600],[690,625],[745,740],[775,767],[795,762],[825,730],[860,718],[890,730],[930,810],[975,980],[1025,1160],[1075,1250],[1105,1252],[1165,1280],[1195,1275],[1250,1115],[1295,1020],[1308,980]]],
 ['l2',[[8,475],[60,360],[100,325],[140,360],[190,480],[225,660],[270,920],[335,1200],[430,1430],[475,1473],[515,1445],[610,1230],[680,1060],[730,965],[770,942],[820,942],[860,900],[920,770],[970,670],[1050,430],[1100,325],[1135,312],[1165,340],[1200,420],[1235,448],[1260,440],[1330,378],[1380,385],[1425,470],[1470,610],[1510,685],[1530,690]],
  [[0,640],[30,590],[90,420],[135,300],[175,225],[255,153],[285,155],[320,190],[370,280],[440,385],[500,432],[560,440],[620,520],[715,610],[770,700],[820,725],[880,720],[920,750],[960,820],[1010,960],[1070,1145],[1130,1210],[1190,1258],[1250,1190],[1308,1085]]],
 ['l3',[[8,492],[45,450],[90,385],[135,355],[170,380],[205,465],[250,640],[300,900],[345,1110],[410,1285],[465,1400],[515,1442],[550,1425],[600,1340],[660,1220],[710,1090],[765,995],[830,950],[885,905],[960,770],[1030,580],[1090,430],[1135,360],[1180,353],[1245,420],[1280,425],[1365,388],[1410,405],[1490,565],[1520,620],[1550,650]],
  [[0,645],[50,590],[100,480],[170,330],[235,230],[290,188],[345,200],[400,270],[490,380],[550,415],[610,455],[710,560],[785,655],[860,705],[920,725],[965,775],[1010,860],[1100,1080],[1190,1210],[1240,1222],[1280,1195],[1308,1152]]]
];

function pts(list, ox, sx, oy) {
  return list.map(function (p) { return [ox + p[0] / sx, oy + p[1] / 3]; });
}
// Join the views, then round the corners with a Catmull-Rom spline.
function curve(parts) {
  var out = [];
  parts.forEach(function (part) {
    if (out.length) { var first = part[0][0]; out = out.filter(function (p) { return p[0] < first; }); }
    out = out.concat(part);
  });
  var f = function (n) { return n.toFixed(1); };
  var d = 'M' + f(out[0][0]) + ' ' + f(out[0][1]);
  for (var i = 0; i < out.length - 1; i++) {
    var p0 = out[Math.max(i - 1, 0)], p1 = out[i], p2 = out[i + 1], p3 = out[Math.min(i + 2, out.length - 1)];
    d += 'C' + f(p1[0] + (p2[0] - p0[0]) / 6) + ' ' + f(p1[1] + (p2[1] - p0[1]) / 6) + ' ' +
         f(p2[0] - (p3[0] - p1[0]) / 6) + ' ' + f(p2[1] - (p3[1] - p1[1]) / 6) + ' ' + f(p2[0]) + ' ' + f(p2[1]);
  }
  return d;
}
function candle(i, r, oy) {
  var x = Math.round(5 + 11.97 * i) + 0.5, c = r[0];
  var t = oy + r[1] / 3, a = oy + r[2] / 3, b = oy + r[3] / 3, e = oy + r[4] / 3, s = '';
  var wick = c === 1 ? 'w-red' : c === 0 ? 'w-cy' : 'w-wh';
  s += '<path class="' + wick + '" d="M' + x + ' ' + t.toFixed(1) + 'V' + a.toFixed(1) + 'M' + x + ' ' + b.toFixed(1) + 'V' + e.toFixed(1) + '"/>';
  if (c === 1) s += '<rect class="c-red" x="' + (x - 3.5) + '" y="' + a.toFixed(1) + '" width="7" height="' + (b - a).toFixed(1) + '"/>';
  else if (c === 0) s += '<rect class="c-cy" x="' + (x - 4) + '" y="' + a.toFixed(1) + '" width="8" height="' + (b - a).toFixed(1) + '"/>';
  else s += '<path class="w-wh" d="M' + (x - 4) + ' ' + a.toFixed(1) + 'h8"/>';
  return s;
}
var html = '';
A.forEach(function (r, i) { html += candle(i, r, 260); });
B.forEach(function (r, i) { html += candle(i + 84, r, 0); });
document.getElementById('candles').innerHTML = html;

html = '';
MAS.forEach(function (m) {
  html += '<path class="ln ' + m[0] + '" d="' + curve([pts(m[1], 0, 2.24, 260), pts(m[2], 620, 2.24, 260), pts(m[3], 1000, 1.96, 0)]) + '"/>';
});
document.getElementById('mas').innerHTML = html;

html = '';
OSC.forEach(function (m) {
  html += '<path class="ln thin ' + m[0] + '" d="' + curve([pts(m[1], 0, 1.568, 770), pts(m[2], 1000, 1.96, 770)]) + '"/>';
});
[197, 293, 317].forEach(function (x) { html += '<rect class="sigbar" x="' + (x - 1.5) + '" y="1233" width="3" height="16"/>'; });
document.getElementById('kdj').innerHTML = html;

// price pane grid, ticks and axis
html = '';
[133, 211, 289, 367, 443, 521, 600, 754].forEach(function (y) { html += '<path class="grid-dot" d="M0 ' + y + '.5H1711"/>'; });
html += '<path class="grid-dot" d="M0 677.5H538"/>';
[133, 172, 211, 250, 289, 328, 367, 406, 443, 483, 521, 561, 600, 638, 677, 716, 754].forEach(function (y) { html += '<path class="axis-line" d="M1711 ' + y + 'h8"/>'; });
html += '<path class="axis-line" d="M1711.5 67V781"/><path class="axis-line" d="M0 781H1787"/>';
document.getElementById('price-grid').innerHTML = html;

// oscillator grid
html = '';
[884, 1177].forEach(function (y) { html += '<path class="grid-dot" d="M0 ' + y + '.5H1711"/>'; });
[958, 1030, 1103].forEach(function (y) { html += '<path class="grid-dot" d="M1678 ' + y + '.5H1711"/>'; });
html += '<path class="h gn" d="M2 811H1684"/><path class="h ye" d="M2 958H1678"/><path class="h rd" d="M2 1030H1684"/><path class="h cy" d="M2 1103H1678"/><path class="h gy" d="M2 1249H1684"/>';
[811, 850, 884, 923, 958, 996, 1030, 1067, 1103, 1142, 1177].forEach(function (y) { html += '<path class="axis-line" d="M1711 ' + y + 'h8"/>'; });
html += '<path class="axis-thick" d="M1711 782H1786V1281H1711Z"/><path class="axis-thick" d="M0 1281H1787"/><path class="axis-thick" d="M0 1305H1787"/>';
[2, 76, 304, 531, 667, 783, 1033].forEach(function (x) { html += '<path class="axis-line" d="M' + x + ' 1282V1305"/>'; });
[133, 189, 245, 361, 417, 474, 594, 1102, 1171, 1238, 1307, 1370, 1434, 1496, 1559, 1620, 1680].forEach(function (x) { html += '<path class="axis-line" d="M' + x + ' 1282v4"/>'; });
document.getElementById('osc-grid').innerHTML = html;
```
